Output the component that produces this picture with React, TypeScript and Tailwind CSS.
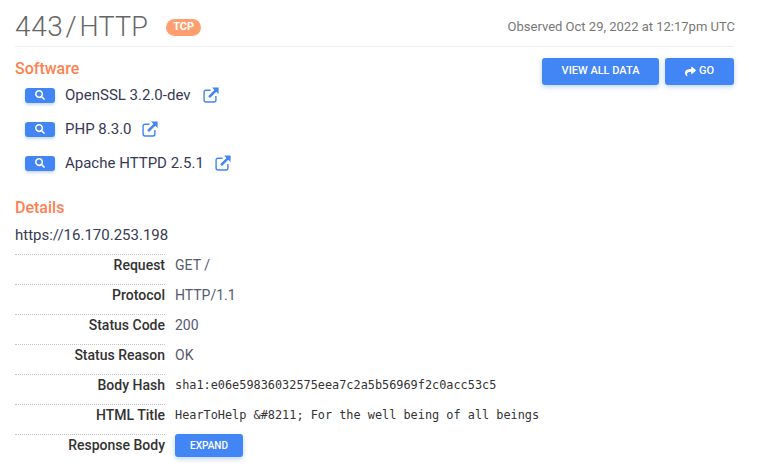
import { FaSearch, FaShare } from "react-icons/fa";

const software: { name: string; gap: string }[] = [
  { name: "OpenSSL 3.2.0-dev", gap: "ml-[12px]" },
  { name: "PHP 8.3.0", gap: "ml-[10px]" },
  { name: "Apache HTTPD 2.5.1", gap: "ml-[11px]" },
];

const details: { label: string; value: string; mono?: boolean }[] = [
  { label: "Request", value: "GET /" },
  { label: "Protocol", value: "HTTP/1.1" },
  { label: "Status Code", value: "200" },
  { label: "Status Reason", value: "OK" },
  { label: "Body Hash", value: "sha1:e06e59836032575eea7c2a5b56969f2c0acc53c5", mono: true },
  { label: "HTML Title", value: "HearToHelp &#8211; For the well being of all beings", mono: true },
];

const btn =
  "bg-[#4285f4] text-white font-medium uppercase rounded-[3px] shadow-[0_2px_5px_rgba(66,133,244,0.35)] flex items-center justify-center";

const labelCell =
  "w-[150px] h-full border-t border-dotted border-[#c4c4c4] flex items-start justify-end text-[14px] leading-[20px] font-medium text-[#333333]";

function LinkIcon() {
  return (
    <svg viewBox="0 0 16 16" className="w-[16px] h-[16px] text-[#4285f4]" fill="none">
      <path
        d="M7.5 3.2H3a1.9 1.9 0 0 0-1.9 1.9v8A1.9 1.9 0 0 0 3 15h8a1.9 1.9 0 0 0 1.9-1.9V9"
        stroke="currentColor"
        strokeWidth="1.4"
      />
      <path d="M9.2 0.6H15.6V7L13.3 4.8L7 11L5.2 9.2L11.4 2.9Z" fill="currentColor" />
    </svg>
  );
}

export default function App() {
  return (
    <div className="w-[770px] h-[473px] overflow-hidden bg-white pl-[15px] pr-[36px] font-['Roboto',sans-serif] text-[#373a53]">
      <div className="flex items-center justify-between h-[47px] border-b border-[#eeeeee] pt-[8px]">
        <div className="flex items-center">
          <h1 className="text-[28px] font-light text-[#666666] leading-none">
            <span className="tracking-[0.6px]">443</span>
            <span className="ml-[2px] mr-[3px]">/</span>
            <span className="text-[27px] tracking-[0.2px]">HTTP</span>
          </h1>
          <span className="ml-[18px] bg-[#ff9e6e] text-white text-[11px] font-bold rounded-full px-[7px] h-[17px] flex items-center">
            TCP
          </span>
        </div>
        <span className="text-[13px] text-[#777777] mr-[-1px]">Observed Oct 29, 2022 at 12:17pm UTC</span>
      </div>

      <div className="flex justify-between">
        <div>
          <h2 className="text-[16px] font-medium text-[#ff7f50] mt-[12px] leading-[19px]">Software</h2>
          <div className="flex flex-col gap-[14px] mt-[7px] pl-[10px]">
            {software.map((s) => (
              <div key={s.name} className="flex items-center h-[20px]">
                <span className="w-[30px] h-[15px] bg-[#4285f4] rounded-[3px] flex items-center justify-center shadow-[0_2px_3px_rgba(66,133,244,0.3)]">
                  <FaSearch className="text-white w-[10px] h-[10px]" />
                </span>
                <span className="ml-[10px] text-[15px]">{s.name}</span>
                <span className={s.gap}>
                  <LinkIcon />
                </span>
              </div>
            ))}
          </div>
        </div>
        <div className="flex gap-[6px] mt-[11px]">
          <button className={`${btn} w-[117px] h-[27px] text-[11px]`}>View All Data</button>
          <button className={`${btn} w-[69px] h-[27px] text-[11px] gap-[3px]`}>
            <FaShare className="w-[11px] h-[11px]" />
            Go
          </button>
        </div>
      </div>

      <h2 className="text-[16px] font-medium text-[#ff7f50] mt-[25px] leading-[19px]">Details</h2>
      <div className="text-[15px] mt-[8px] leading-[20px] mb-[9px]">https://16.170.253.198</div>

      <div className="flex flex-col">
        {details.map((d) => (
          <div key={d.label} className="flex h-[30px]">
            <div className={labelCell}>{d.label}</div>
            <div
              className={
                d.mono
                  ? "ml-[10px] pt-[1px] text-[11.87px] leading-[20px] font-['DejaVu_Sans_Mono',monospace] text-[#333333]"
                  : "ml-[10px] pt-[1px] text-[14px] leading-[20px] text-[#555a70]"
              }
            >
              {d.value}
            </div>
          </div>
        ))}
        <div className="flex h-[30px]">
          <div className={labelCell}>Response Body</div>
          <button className={`${btn} ml-[10px] w-[68px] h-[23px] text-[10px]`}>Expand</button>
        </div>
      </div>
    </div>
  );
}
